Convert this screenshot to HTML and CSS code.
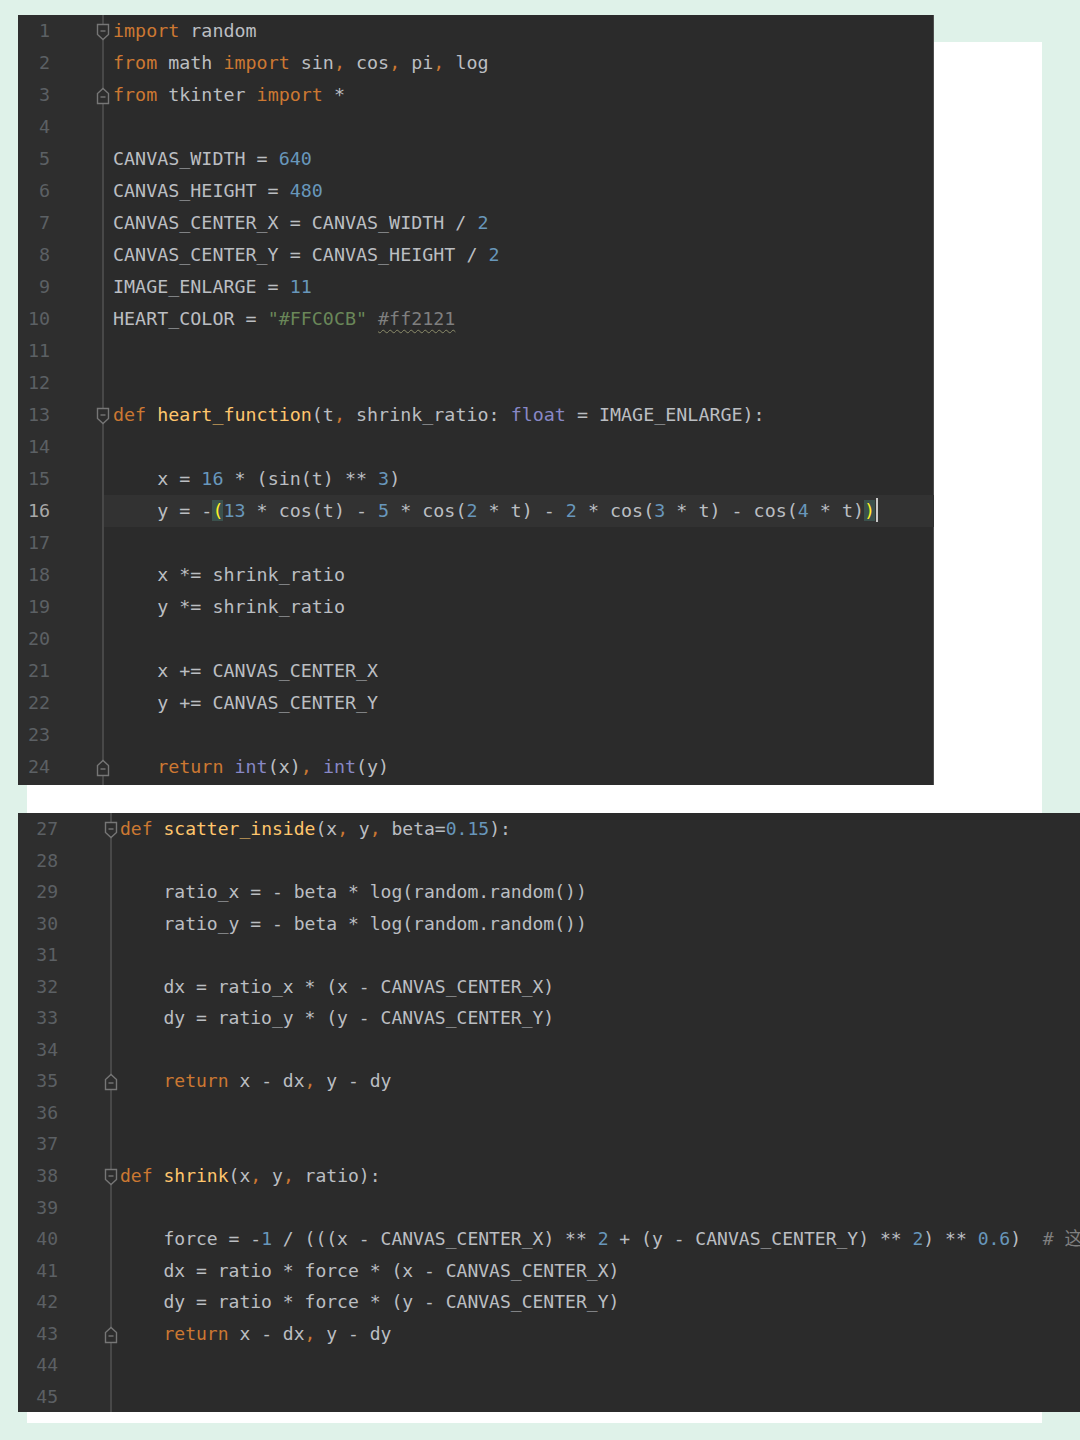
FILE: index.html
```html
<!DOCTYPE html>
<html lang="zh">
<head>
<meta charset="utf-8">
<title>heart code</title>
<link rel="stylesheet" href="styles.css">
</head>
<body>
<div class="card">
  <section class="panel panel-a">
    <div class="gutter">
      <div class="num">1</div><div class="num">2</div><div class="num">3</div><div class="num">4</div><div class="num">5</div><div class="num">6</div><div class="num">7</div><div class="num">8</div><div class="num">9</div><div class="num">10</div><div class="num">11</div><div class="num">12</div><div class="num">13</div><div class="num">14</div><div class="num">15</div><div class="num cur">16</div><div class="num">17</div><div class="num">18</div><div class="num">19</div><div class="num">20</div><div class="num">21</div><div class="num">22</div><div class="num">23</div><div class="num">24</div>
    </div>
    <div class="code">
      <div class="line"><svg class="fold" viewBox="0 0 14 18"><path d="M1.5 1.5H12.5V11.5L7 16.5L1.5 11.5Z"/><path d="M4.5 8H9.5"/></svg><span class="k">import</span> random</div>
      <div class="line"><span class="k">from</span> math <span class="k">import</span> sin<span class="p">,</span> cos<span class="p">,</span> pi<span class="p">,</span> log</div>
      <div class="line"><svg class="fold" viewBox="0 0 14 18"><path d="M1.5 16.5H12.5V6.5L7 1.5L1.5 6.5Z"/><path d="M4.5 10H9.5"/></svg><span class="k">from</span> tkinter <span class="k">import</span> *</div>
      <div class="line"></div>
      <div class="line">CANVAS_WIDTH = <span class="n">640</span></div>
      <div class="line">CANVAS_HEIGHT = <span class="n">480</span></div>
      <div class="line">CANVAS_CENTER_X = CANVAS_WIDTH / <span class="n">2</span></div>
      <div class="line">CANVAS_CENTER_Y = CANVAS_HEIGHT / <span class="n">2</span></div>
      <div class="line">IMAGE_ENLARGE = <span class="n">11</span></div>
      <div class="line">HEART_COLOR = <span class="s">"#FFC0CB"</span> <span class="c typo">#ff2121</span></div>
      <div class="line"></div>
      <div class="line"></div>
      <div class="line"><svg class="fold" viewBox="0 0 14 18"><path d="M1.5 1.5H12.5V11.5L7 16.5L1.5 11.5Z"/><path d="M4.5 8H9.5"/></svg><span class="k">def</span> <span class="f">heart_function</span>(t<span class="p">,</span> shrink_ratio: <span class="b">float</span> = IMAGE_ENLARGE):</div>
      <div class="line"></div>
      <div class="line">    x = <span class="n">16</span> * (sin(t) ** <span class="n">3</span>)</div>
      <div class="line active">    y = -<span class="br">(</span><span class="n">13</span> * cos(t) - <span class="n">5</span> * cos(<span class="n">2</span> * t) - <span class="n">2</span> * cos(<span class="n">3</span> * t) - cos(<span class="n">4</span> * t)<span class="br">)</span><span class="caret"></span></div>
      <div class="line"></div>
      <div class="line">    x *= shrink_ratio</div>
      <div class="line">    y *= shrink_ratio</div>
      <div class="line"></div>
      <div class="line">    x += CANVAS_CENTER_X</div>
      <div class="line">    y += CANVAS_CENTER_Y</div>
      <div class="line"></div>
      <div class="line"><svg class="fold" viewBox="0 0 14 18"><path d="M1.5 16.5H12.5V6.5L7 1.5L1.5 6.5Z"/><path d="M4.5 10H9.5"/></svg>    <span class="k">return</span> <span class="b">int</span>(x)<span class="p">,</span> <span class="b">int</span>(y)</div>
    </div>
  </section>

  <section class="panel panel-b">
    <div class="gutter">
      <div class="num">27</div><div class="num">28</div><div class="num">29</div><div class="num">30</div><div class="num">31</div><div class="num">32</div><div class="num">33</div><div class="num">34</div><div class="num">35</div><div class="num">36</div><div class="num">37</div><div class="num">38</div><div class="num">39</div><div class="num">40</div><div class="num">41</div><div class="num">42</div><div class="num">43</div><div class="num">44</div><div class="num">45</div>
    </div>
    <div class="code">
      <div class="line"><svg class="fold" viewBox="0 0 14 18"><path d="M1.5 1.5H12.5V11.5L7 16.5L1.5 11.5Z"/><path d="M4.5 8H9.5"/></svg><span class="k">def</span> <span class="f">scatter_inside</span>(x<span class="p">,</span> y<span class="p">,</span> beta=<span class="n">0.15</span>):</div>
      <div class="line"></div>
      <div class="line">    ratio_x = - beta * log(random.random())</div>
      <div class="line">    ratio_y = - beta * log(random.random())</div>
      <div class="line"></div>
      <div class="line">    dx = ratio_x * (x - CANVAS_CENTER_X)</div>
      <div class="line">    dy = ratio_y * (y - CANVAS_CENTER_Y)</div>
      <div class="line"></div>
      <div class="line"><svg class="fold" viewBox="0 0 14 18"><path d="M1.5 16.5H12.5V6.5L7 1.5L1.5 6.5Z"/><path d="M4.5 10H9.5"/></svg>    <span class="k">return</span> x - dx<span class="p">,</span> y - dy</div>
      <div class="line"></div>
      <div class="line"></div>
      <div class="line"><svg class="fold" viewBox="0 0 14 18"><path d="M1.5 1.5H12.5V11.5L7 16.5L1.5 11.5Z"/><path d="M4.5 8H9.5"/></svg><span class="k">def</span> <span class="f">shrink</span>(x<span class="p">,</span> y<span class="p">,</span> ratio):</div>
      <div class="line"></div>
      <div class="line">    force = -<span class="n">1</span> / (((x - CANVAS_CENTER_X) ** <span class="n">2</span> + (y - CANVAS_CENTER_Y) ** <span class="n">2</span>) ** <span class="n">0.6</span>)  <span class="c"># 这里调整力度</span></div>
      <div class="line">    dx = ratio * force * (x - CANVAS_CENTER_X)</div>
      <div class="line">    dy = ratio * force * (y - CANVAS_CENTER_Y)</div>
      <div class="line"><svg class="fold" viewBox="0 0 14 18"><path d="M1.5 16.5H12.5V6.5L7 1.5L1.5 6.5Z"/><path d="M4.5 10H9.5"/></svg>    <span class="k">return</span> x - dx<span class="p">,</span> y - dy</div>
      <div class="line"></div>
      <div class="line"></div>
    </div>
  </section>
</div>
</body>
</html>
```
FILE: styles.css
```css
html, body {
  margin: 0;
  padding: 0;
  background: #dff2e9;
}

body {
  width: 1080px;
  height: 1440px;
  overflow: hidden;
}

.card {
  display: flex;
  flex-direction: column;
  align-items: flex-start;
  box-sizing: border-box;
  width: 1015px;
  margin: 42px 0 0 27px;
  padding-bottom: 11px;
  background: #ffffff;
}

.panel {
  display: flex;
  background: #2b2b2b;
  overflow: hidden;
  font-family: "DejaVu Sans Mono", "Noto Sans CJK SC", monospace;
  color: #bbbec2;
}

.panel-a {
  width: 916px;
  height: 770px;
  margin: -27px 0 0 -9px;
  font-size: 18.35px;
  line-height: 32px;
  box-shadow: inset -1px 0 0 #4e4e4e;
}

.panel-b {
  width: 1062px;
  height: 599px;
  margin: 28px 0 0 -9px;
  font-size: 18.05px;
  line-height: 31.55px;
}

.gutter {
  flex: none;
  background: #2e2e2e;
  border-right: 2px solid #484848;
  color: #5c6064;
  text-align: right;
}

.panel-a .gutter {
  width: 84px;
}

.panel-a .num {
  padding-right: 52px;
}

.panel-b .gutter {
  width: 92px;
}

.panel-b .num {
  padding-right: 52px;
}

.num.cur {
  color: #a8a8a8;
}

.code {
  flex: 1;
  min-width: 0;
}

.line {
  position: relative;
  white-space: pre;
  height: 32px;
}

.panel-a .line {
  padding-left: 9px;
}

.panel-b .line {
  height: 31.55px;
  padding-left: 8px;
}

.line.active {
  background: #323232;
}

.fold {
  position: absolute;
  left: -8px;
  top: 8px;
  width: 14px;
  height: 18px;
  fill: #2d2d2d;
  stroke: #767676;
  stroke-width: 1.4;
}

.k { color: #cc7832; }
.f { color: #ffc66d; }
.n { color: #6897bb; }
.s { color: #6a8759; }
.b { color: #8888c6; }
.p { color: #cc7832; }
.c { color: #7f7f7f; }

.typo {
  text-decoration: underline wavy #8c8c6a;
  text-underline-offset: 4px;
  text-decoration-thickness: 1px;
}

.br {
  color: #ffef28;
  background: #3b514d;
}

.caret {
  display: inline-block;
  width: 2px;
  height: 24px;
  margin-left: 1px;
  vertical-align: -5px;
  background: #c8c8c8;
}
```
